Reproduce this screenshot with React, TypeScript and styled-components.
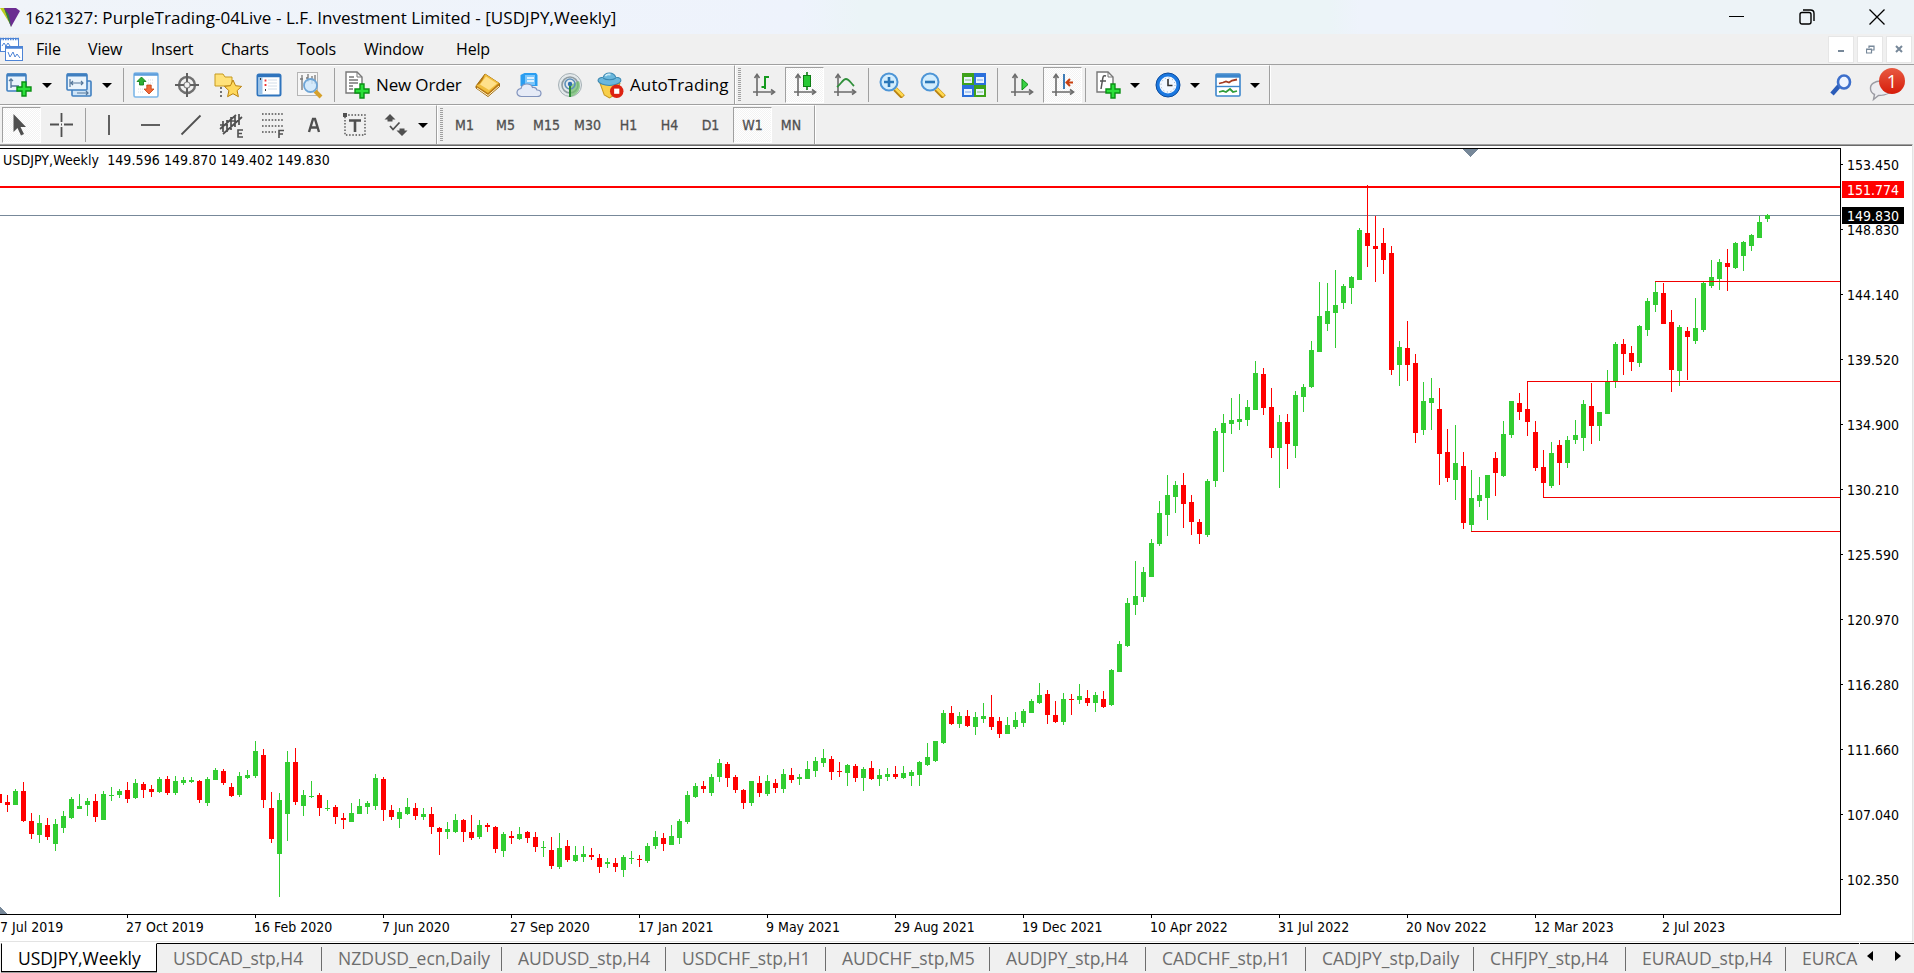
import React from "react";
import styled, { createGlobalStyle, css } from "styled-components";

const GlobalStyle = createGlobalStyle`
  * { box-sizing: border-box; }
  body {
    margin: 0;
    overflow: hidden;
    background: #f0f0f0;
    font-family: "Open Sans", "Noto Sans", sans-serif;
  }
`;

const Window = styled.div`
  width: 1914px;
  height: 973px;
  display: flex;
  flex-direction: column;
  background: #f0f0f0;
  color: #000;
  overflow: hidden;
`;

const TitleBar = styled.div`
  height: 34px;
  flex: none;
  display: flex;
  align-items: center;
  padding-right: 2px;
  background: linear-gradient(90deg, #f0f4f9 0, #eef3fc 800px, #ebf4f7 860px, #ebf4f7 1330px, #eef3fb 1360px, #eef3fb 1550px, #edf3f7 1600px);
  svg { display: block; }
`;

const TitleText = styled.div`
  flex: 1;
  margin-left: 4px;
  font-size: 17px;
  line-height: 35px;
  letter-spacing: 0.05px;
  white-space: nowrap;
`;

const CaptionButton = styled.div`
  width: 70px;
  height: 34px;
  display: flex;
  align-items: center;
  justify-content: center;
`;

const MenuBar = styled.div`
  height: 30px;
  flex: none;
  display: flex;
  align-items: center;
`;

const MenuItem = styled.div<{ $w: number }>`
  width: ${(p) => p.$w}px;
  font-size: 16px;
  line-height: 30px;
  letter-spacing: -0.15px;
  white-space: nowrap;
`;

const ChildButtons = styled.div`
  margin-left: auto;
  margin-right: 2px;
  display: flex;
  gap: 3px;
`;

const ChildButton = styled.div`
  width: 26px;
  height: 27px;
  background: #fff;
  border: 1px solid #e6e6e6;
  display: flex;
  align-items: center;
  justify-content: center;
`;

const ToolRow = styled.div`
  height: 40px;
  flex: none;
  display: flex;
  border-top: 1px solid #a0a0a0;
`;

const Bar = styled.div<{ $w: number }>`
  width: ${(p) => p.$w}px;
  height: 40px;
  display: flex;
  align-items: center;
  border-top: 1px solid #fff;
  border-right: 1px solid #a0a0a0;
  border-bottom: 1px solid #a0a0a0;
  box-shadow: 1px 0 0 #fff;
  white-space: nowrap;
`;

const pressed = css`
  border: 1px solid #fff;
  border-top-color: #a0a0a0;
  border-left-color: #a0a0a0;
  background: repeating-conic-gradient(#fff 0 25%, #f3f3f3 0 50%) 0 0 / 2px 2px;
`;

const Tool = styled.div<{ $w?: number; $active?: boolean; $ml?: number }>`
  width: ${(p) => p.$w ?? 41}px;
  margin-left: ${(p) => p.$ml ?? 0}px;
  height: 36px;
  flex: none;
  display: flex;
  align-items: center;
  justify-content: center;
  ${(p) => p.$active && pressed}
  svg { display: block; }
`;

const ToolText = styled.div<{ $w: number; $track: number }>`
  width: ${(p) => p.$w}px;
  flex: none;
  padding-bottom: 2px;
  font-size: 17px;
  letter-spacing: ${(p) => p.$track}px;
`;

const Frame = styled(Tool)`
  font-family: "DejaVu Sans Condensed", "DejaVu Sans", sans-serif;
  font-size: 14px;
  color: #505050;
  -webkit-text-stroke: 0.3px #505050;
`;

const Caret = styled.div<{ $ml: number }>`
  margin-left: ${(p) => p.$ml}px;
  flex: none;
  border: 5px solid transparent;
  border-top: 5px solid #000;
  border-bottom: 0;
`;

const Sep = styled.div<{ $l: number; $r: number }>`
  width: 1px;
  height: 34px;
  flex: none;
  margin: 0 ${(p) => p.$r}px 0 ${(p) => p.$l}px;
  background: #a0a0a0;
`;

const Grip = styled.div`
  width: 3px;
  height: 34px;
  flex: none;
  margin: 0 0 0 3px;
  background: repeating-linear-gradient(#a0a0a0 0 1px, #f0f0f0 1px 2px);
`;

const RightTools = styled.div`
  margin-left: auto;
  display: flex;
  align-items: center;
  gap: 17px;
  padding-right: 7px;
`;

const Mail = styled.div`
  position: relative;
  width: 38px;
  height: 36px;
`;

const Badge = styled.div`
  position: absolute;
  top: 1px;
  right: 2px;
  width: 26px;
  height: 26px;
  border-radius: 50%;
  background: linear-gradient(#e85a41, #d61c0a);
  color: #fff;
  font-size: 18px;
  line-height: 26px;
  text-align: center;
`;

const ChartWindow = styled.div`
  flex: 1;
  min-height: 0;
  display: grid;
  grid-template-columns: 1841px 1fr;
  grid-template-rows: 770px 1fr;
  background: #fff;
  border-top: 1px solid #a0a0a0;
  border-right: 1px solid #e3e3e3;
  border-bottom: 1px solid #e3e3e3;
  box-shadow: inset 0 1px 0 #696969;
  padding-top: 3px;
  margin-right: 1px;
  font-family: "DejaVu Sans Condensed", "DejaVu Sans", sans-serif;
  font-size: 14px;
`;

const Plot = styled.div`
  position: relative;
  svg { display: block; }
`;

const Caption = styled.div`
  position: absolute;
  left: 3px;
  top: 3px;
  line-height: 18px;
  letter-spacing: 0.08px;
  white-space: pre;
`;

const PriceAxis = styled.div`
  position: relative;
  height: 766px;
  margin-top: -16px;
  display: flex;
  flex-direction: column;
`;

const Price = styled.div`
  height: 65px;
  flex: none;
  display: flex;
  align-items: center;
  gap: 4px;
  &::before {
    content: "";
    width: 2px;
    height: 1px;
    background: #000;
  }
`;

const PriceTag = styled.div<{ $top: number; $bg: string }>`
  position: absolute;
  left: 1px;
  top: ${(p) => p.$top}px;
  width: 62px;
  height: 17px;
  padding-left: 5px;
  line-height: 18px;
  color: #fff;
  background: ${(p) => p.$bg};
`;

const DateAxis = styled.div`
  grid-column: 1 / 3;
  display: flex;
  overflow: hidden;
  line-height: 18px;
`;

const DateLabel = styled.div<{ $w: number }>`
  width: ${(p) => p.$w}px;
  flex: none;
  white-space: nowrap;
`;

const TabBar = styled.div`
  height: 31px;
  flex: none;
  display: flex;
  border-top: 1px solid #fff;
  padding-left: 1px;
`;

const TabStrip = styled.div`
  width: 1859px;
  flex: none;
  display: flex;
  overflow: hidden;
`;

const Tab = styled.div<{ $w: number; $active?: boolean }>`
  width: ${(p) => p.$w}px;
  height: 30px;
  flex: none;
  padding-left: 16px;
  font-size: 17.5px;
  line-height: 29px;
  letter-spacing: 0;
  white-space: nowrap;
  color: #6d6d6d;
  border-top: 1px solid #000;
  background: linear-gradient(#6d6d6d, #6d6d6d) right 3px / 1px 24px no-repeat;
  ${(p) =>
    p.$active &&
    css`
      height: 29px;
      color: #000;
      background: #fff;
      border: 1px solid #000;
      border-top-color: #fff;
      box-shadow: 0 1px 0 #a0a0a0;
    `}
  &:last-child {
    background: none;
  }
`;

const TabArrows = styled.div`
  flex: 1;
  display: flex;
  gap: 22px;
  padding: 7px 0 0 7px;
  border-top: 1px solid #000;
`;

type Candle = [up: 0 | 1, high: number, top: number, bottom: number, low: number];

// one entry per week, y values in window pixels
const candles: Candle[] = [
  [0,794,794,803,803],[0,795,802,805,812],[1,789,791,805,805],[0,782,791,821,822],[0,813,821,834,839],
  [1,815,823,835,843],[0,818,825,837,840],[1,819,824,844,851],[1,811,816,828,833],[1,797,799,818,819],
  [1,794,806,809,809],[1,798,801,805,816],[0,794,801,817,822],[1,791,794,820,820],[1,787,795,796,801],
  [1,789,791,795,798],[0,782,790,799,803],[1,779,783,798,799],[0,782,784,790,798],[0,785,789,792,797],
  [1,777,779,792,793],[0,776,779,793,795],[1,776,781,793,795],[1,777,780,783,785],[1,777,780,782,783],
  [0,780,781,800,803],[1,777,779,803,806],[1,768,770,780,780],[0,769,771,783,785],[0,783,787,796,797],
  [1,772,776,795,797],[1,770,775,778,779],[1,741,751,776,778],[0,749,755,800,808],[0,792,808,839,843],
  [1,793,800,854,897],[1,751,762,814,841],[0,748,762,802,805],[1,790,795,806,816],[1,781,796,797,798],
  [0,793,795,808,816],[1,800,808,809,811],[0,805,807,817,824],[0,813,818,820,829],[1,803,813,822,822],
  [1,799,806,814,814],[1,801,803,807,814],[1,774,778,806,810],[0,777,779,810,821],[0,805,810,817,820],
  [1,808,812,819,828],[1,798,807,814,815],[0,803,808,816,820],[1,808,814,817,820],[0,807,814,827,834],
  [0,827,828,832,855],[1,822,829,832,839],[1,814,820,832,833],[0,819,820,832,842],[0,815,832,838,840],
  [1,820,825,837,839],[0,823,825,827,832],[0,826,827,849,853],[1,832,834,851,857],[0,831,836,838,844],
  [1,827,834,839,840],[0,831,832,838,843],[0,832,837,847,852],[1,841,847,848,857],[0,837,850,866,869],
  [1,833,848,867,869],[0,840,846,860,862],[1,846,855,861,862],[1,846,854,857,862],[0,848,855,857,860],
  [0,854,858,867,873],[1,858,862,864,868],[0,858,863,867,872],[1,855,857,870,877],[1,851,858,859,864],
  [0,855,859,860,867],[1,843,846,861,863],[1,831,837,846,849],[0,833,838,844,851],[1,825,836,845,845],
  [1,819,821,838,844],[1,791,795,822,824],[1,783,786,797,798],[0,781,786,789,793],[1,774,777,793,796],
  [1,759,763,777,782],[0,762,764,778,787],[0,775,777,790,793],[0,789,790,803,809],[1,781,781,803,806],
  [0,776,783,793,797],[1,775,781,794,796],[0,779,783,788,793],[1,769,774,789,793],[0,768,775,780,783],
  [1,774,777,779,785],[1,761,769,779,779],[1,757,761,771,777],[1,749,758,763,767],[0,756,759,772,780],
  [0,762,771,772,777],[1,764,765,773,786],[0,764,766,778,782],[1,767,769,778,791],[0,761,768,779,780],
  [1,769,775,779,786],[1,768,774,777,781],[0,766,774,777,779],[1,766,773,778,779],[1,770,772,776,786],
  [1,761,762,775,786],[1,743,757,765,766],[1,741,741,761,762],[1,710,713,743,744],[0,706,713,724,725],
  [1,712,716,724,728],[0,710,716,726,727],[1,712,717,727,735],[1,703,716,719,723],[0,695,717,727,730],
  [0,717,721,734,738],[1,717,725,734,734],[1,712,720,727,729],[1,709,711,723,727],[1,699,701,713,713],
  [1,683,695,703,704],[0,690,694,715,724],[0,701,715,722,723],[1,693,699,722,725],[0,694,699,700,715],
  [1,684,696,700,704],[0,690,698,703,706],[1,692,695,703,712],[0,691,699,707,708],[1,669,670,705,706],
  [1,641,644,672,672],[1,598,603,646,647],[1,561,596,605,615],[1,567,572,597,602],[1,539,543,577,577],
  [1,501,513,544,546],[1,475,495,515,536],[1,481,485,497,513],[0,473,485,504,528],[0,495,502,522,535],
  [0,519,522,534,544],[1,479,481,535,537],[1,428,431,481,487],[1,414,423,433,472],[1,398,420,424,434],
  [1,394,419,422,430],[1,400,407,420,426],[1,361,373,410,410],[0,368,374,408,415],[0,388,407,448,458],
  [1,415,422,448,488],[0,414,422,444,469],[1,391,395,446,458],[1,384,387,397,412],[1,341,350,387,388],
  [1,282,316,352,352],[1,283,311,324,331],[1,270,305,313,348],[1,284,286,303,309],[1,276,277,288,304],
  [1,228,230,280,280],[0,185,233,246,267],[0,216,246,249,282],[0,228,243,260,274],[0,246,253,370,375],
  [1,341,347,365,386],[0,321,348,365,381],[0,354,363,433,443],[1,382,401,430,435],[1,378,398,403,430],
  [0,388,409,454,485],[0,429,452,478,482],[1,425,463,480,500],[0,452,466,523,529],[1,470,498,525,531],
  [1,477,495,501,507],[1,475,475,498,520],[0,452,458,473,496],[1,421,434,476,477],[1,401,401,435,438],
  [0,393,403,412,420],[0,382,409,422,436],[0,421,432,468,471],[0,450,467,483,497],[1,442,453,486,488],
  [0,440,445,463,485],[1,436,440,463,468],[1,420,435,440,444],[1,400,404,438,451],[0,383,406,426,444],
  [1,412,412,426,441],[1,370,381,414,414],[1,342,344,381,388],[0,339,344,354,375],[0,346,353,362,371],
  [1,325,326,363,367],[1,298,301,330,336],[1,282,292,305,312],[0,283,293,324,324],[0,310,322,370,392],
  [1,325,327,371,386],[0,327,331,337,380],[1,298,328,341,344],[1,282,283,330,332],[1,260,277,286,288],
  [1,259,262,279,290],[0,249,263,267,291],[1,242,243,268,269],[1,241,242,256,271],[1,234,235,246,251],
  [1,216,222,238,238],[1,214,215,219,222],
];

// support / resistance rays: start x, y
const rays = [
  [1655, 281],
  [1527, 381],
  [1543, 497],
  [1471, 531],
];

const prices = [
  "153.450", "148.830", "144.140", "139.520", "134.900", "130.210",
  "125.590", "120.970", "116.280", "111.660", "107.040", "102.350",
];

const dates = [
  "27 Oct 2019", "16 Feb 2020", "7 Jun 2020", "27 Sep 2020", "17 Jan 2021", "9 May 2021", "29 Aug 2021",
  "19 Dec 2021", "10 Apr 2022", "31 Jul 2022", "20 Nov 2022", "12 Mar 2023", "2 Jul 2023",
];

const menu: [string, number][] = [
  ["File", 52], ["View", 63], ["Insert", 70], ["Charts", 76], ["Tools", 67], ["Window", 92], ["Help", 60],
];

const tabs: [string, number][] = [
  ["USDJPY,Weekly", 156], ["USDCAD_stp,H4", 165], ["NZDUSD_ecn,Daily", 180], ["AUDUSD_stp,H4", 164],
  ["USDCHF_stp,H1", 160], ["AUDCHF_stp,M5", 164], ["AUDJPY_stp,H4", 156], ["CADCHF_stp,H1", 160],
  ["CADJPY_stp,Daily", 168], ["CHFJPY_stp,H4", 152], ["EURAUD_stp,H4", 160], ["EURCA", 73],
];

const frames = ["M1", "M5", "M15", "M30", "H1", "H4", "D1", "W1", "MN"];

const Svg = ({ children, s = 26 }: { children: React.ReactNode; s?: number }) => (
  <svg width={s} height={s} viewBox="0 0 26 26" fill="none">{children}</svg>
);

const Plus = ({ x, y }: { x: number; y: number }) => (
  <path
    d={`M${x + 5} ${y}h4v5h5v4h-5v5h-4v-5h-5v-4h5z`}
    fill="#2be03a"
    stroke="#0a9014"
    strokeWidth="1.4"
  />
);

const Axes = () => (
  <g stroke="#6b6b6b" strokeWidth="1.6">
    <path d="M6 3v21M2 20h21" />
    <path d="M3.5 6 6 2.5 8.5 6M20 17.5l3.5 2.5-3.5 2.5" />
  </g>
);

const NewChartIcon = () => (
  <Svg>
    <rect x="1" y="2" width="19" height="17" rx="1" fill="#eaf4fc" stroke="#3f7fc0" strokeWidth="1.6" />
    <path d="M1 3h19" stroke="#3f7fc0" strokeWidth="3" />
    <path d="M5 7v9M3 9l2-2 2 2M5 14h8" stroke="#55779a" strokeWidth="1.3" />
    <Plus x={11} y={10} />
  </Svg>
);

const ProfilesIcon = () => (
  <Svg>
    <rect x="6" y="9" width="19" height="15" rx="1" fill="#cfe4f7" stroke="#3f7fc0" strokeWidth="1.6" />
    <rect x="1" y="2" width="20" height="16" rx="1" fill="#eaf4fc" stroke="#3f7fc0" strokeWidth="1.6" />
    <path d="M1 3h20" stroke="#3f7fc0" strokeWidth="3" />
    <path d="M4 7v8M4 11h13M15 9l2 2-2 2M7 9l-2 2 2 2M11 21h11M20 19l2 2-2 2" stroke="#55779a" strokeWidth="1.2" />
  </Svg>
);

const MarketIcon = () => (
  <Svg>
    <rect x="1" y="1" width="24" height="24" rx="1.5" fill="#fff" stroke="#7db7e8" strokeWidth="1.6" />
    <path d="M1 2.5h24" stroke="#5f9fdc" strokeWidth="2.6" />
    <path d="M5 17h5M5 20h5M15 8h6M15 11h6" stroke="#d5dde6" strokeDasharray="1 1" />
    <path d="M8.500 5l4.500 4.500h-2.500v3.500h-4v-3.500H4z" fill="#2fae35" stroke="#0a7a12" strokeWidth=".8" />
    <path d="M16 22l-5-5h2.800v-4h4.400v4H21z" fill="#f2683a" stroke="#c2410e" strokeWidth=".8" />
  </Svg>
);

const TargetIcon = () => (
  <Svg>
    <circle cx="13" cy="13" r="8" stroke="#707070" strokeWidth="2.4" />
    <circle cx="13" cy="13" r="3" stroke="#8a8a8a" strokeWidth="1.2" />
    <path d="M13 1v9M13 16v9M1 13h9M16 13h9" stroke="#606060" strokeWidth="2" />
  </Svg>
);

const FolderStarIcon = () => (
  <svg width="28" height="28" viewBox="0 0 28 28" fill="none">
    <path d="M1 3h8l2 3h7v9H1z" fill="#ffe27a" stroke="#c79a1e" />
    <path d="M7 16v10" stroke="#555" strokeWidth="1.6" strokeDasharray="2 2" />
    <path d="M19 9l2.6 5.7 6 .7-4.5 4.2 1.3 6.1-5.400-3-5.400 3 1.300-6.100-4.500-4.200 6-.7z" fill="#ffd95c" stroke="#b98210" />
  </svg>
);

const TerminalIcon = () => (
  <Svg>
    <rect x="1.5" y="2.5" width="23" height="21" rx="1.5" fill="#fff" stroke="#2f74bd" strokeWidth="2" />
    <path d="M2 4h22" stroke="#2f74bd" strokeWidth="2.5" />
    <path d="M4.500 5v18" stroke="#9cc5ea" strokeWidth="4" />
    <path d="M9.500 7.500v2M9.500 12v2" stroke="#e33" strokeWidth="1.800" />
    <path d="M12 8h9M12 11h9M12 14h9M12 17h9" stroke="#d3deea" strokeWidth="1" />
    <path d="M4.500 6v2M9.500 17v2" stroke="#333" />
  </Svg>
);

const TesterIcon = () => (
  <svg width="28" height="28" viewBox="0 0 28 28" fill="none">
    <rect x="1.5" y="1.5" width="20" height="23" fill="#f6f6f6" stroke="#b5b5b5" />
    <path d="M6 4v15M4 8h3M12 3v8M16 5v8M19 4v9M10 7h2" stroke="#777" strokeWidth="1.3" />
    <path d="M19 20l6 6" stroke="#d6a02a" strokeWidth="4" />
    <circle cx="14.5" cy="14.5" r="6.5" fill="#cfe8fb" fillOpacity=".85" stroke="#6ea5d6" strokeWidth="1.8" />
  </svg>
);

const NewOrderIcon = () => (
  <svg width="27" height="28" viewBox="0 0 27 28" fill="none">
    <path d="M2 1h11l5 5v16H2z" fill="#fff" stroke="#777" strokeWidth="1.4" />
    <path d="M13 1v5h5" stroke="#777" />
    <path d="M5 6h5M5 9h9M5 12h9M5 15h4M5 18h4" stroke="#777" strokeWidth="1.4" />
    <Plus x={11} y={13} />
  </svg>
);

const BookIcon = () => (
  <Svg>
    <path d="M10 2l14.500 9.500v3L13 24.500 1 16v-2z" fill="#b97a14" stroke="#a26e10" />
    <path d="M2 16l11 7.500 11-9.500" stroke="#fff3cf" strokeWidth="1" />
    <path d="M10 2l14 9-11 10L1 13.500c4-1 7-5 9-11.500z" fill="#f0bd3c" />
    <path d="M11 4.500l11 7-8 6.500-9-5.500z" fill="#ffe08a" />
  </Svg>
);

const CloudIcon = () => (
  <Svg>
    <path d="M4.500 3l4-2H20l1.500 2v11h-17z" fill="#2a9df0" />
    <path d="M9 3h10v10H9z" fill="#7cc6fa" />
    <path d="M11 6h7M11 9h7" stroke="#fff" strokeWidth="1.400" />
    <path d="M5.500 24.500C2.500 24.500 1 22.500 1 20.500S2.500 17 5 16.500C5.500 13.500 8 12 11 12s5 1.500 5.500 3.500c3-.5 4 1 4.500 2.500 2.500 0 4 1.500 4 3.200s-1.500 3.300-4 3.300z" fill="#e6ebf7" stroke="#8193bd" strokeWidth="1.200" />
  </Svg>
);

const SignalIcon = () => (
  <Svg>
    <circle cx="13" cy="13" r="11.5" fill="#e3e8ea" stroke="#a5b0b5" />
    <circle cx="13" cy="13" r="8" stroke="#8f9ca2" strokeWidth="1.6" />
    <path d="M13 25V13l9-4c3 7-1 14-9 16z" fill="#6fbf6a" fillOpacity=".7" />
    <circle cx="13" cy="12" r="5" stroke="#5e8fb9" strokeWidth="1.6" />
    <circle cx="13" cy="12" r="2.2" fill="#2f6fb0" />
    <path d="M13 14v11" stroke="#2c8a36" strokeWidth="2" />
  </Svg>
);

const AutoIcon = () => (
  <Svg s={27}>
    <path d="M3 11h19l-5 11-5 3-5-3z" fill="#f8cf4a" stroke="#c9971c" />
    <path d="M1 8c0-2 3-3 5-3 1-3 3-4 6-4s5 1 6 4c3 0 5 1 5 3 0 3-6 5-11 5S1 11 1 8z" fill="#6ab7dc" stroke="#3b87b0" />
    <path d="M6 6c3 2 9 2 12 0" stroke="#3b87b0" />
    <path d="M8 4c1-1.500 3-2 5-1.500" stroke="#c9ebf8" strokeWidth="1.600" />
    <circle cx="19" cy="18.500" r="6.500" fill="#dd2211" />
    <rect x="16.500" y="16" width="5" height="5" fill="#fff" />
  </Svg>
);

const BarsIcon = () => (
  <Svg>
    <Axes />
    <path d="M14 4v13M14 5h4M10.5 15H14" stroke="#159a1e" strokeWidth="2" />
  </Svg>
);

const CandleIcon = () => (
  <Svg>
    <Axes />
    <path d="M15 0v18" stroke="#0d7d14" strokeWidth="1.6" />
    <rect x="11.5" y="3.5" width="7" height="11" fill="#28c934" stroke="#0d7d14" />
  </Svg>
);

const LineIcon = () => (
  <Svg>
    <Axes />
    <path d="M5 15C9 12 11 7 14 7s4 3 8 7" stroke="#2f8f3a" strokeWidth="1.8" />
  </Svg>
);

const ZoomIcon = ({ plus }: { plus?: boolean }) => (
  <Svg>
    <path d="M16 17l8 8" stroke="#b98210" strokeWidth="5" />
    <path d="M16 16l8 8" stroke="#ffd84f" strokeWidth="2.6" />
    <circle cx="10" cy="10" r="8.5" fill="#d3edfd" stroke="#4d95d6" strokeWidth="2" />
    <path d={plus ? "M5 10h10M10 5v10" : "M5 10h10"} stroke="#2a77b8" strokeWidth="2.6" />
  </Svg>
);

const TileIcon = () => (
  <Svg>
    {[[1, 1, "#3fa21a"], [13, 1, "#2b6fdb"], [1, 13, "#2b6fdb"], [13, 13, "#3fa21a"]].map(([x, y, c]) => (
      <g key={`${x}-${y}`}>
        <rect x={x} y={y} width="12" height="12" fill={c as string} />
        <rect x={+x + 2} y={+y + 4} width="8" height="6" fill="#e9f3ff" />
        <path d={`M${+x + 3} ${+y + 7}h6`} stroke={c as string} strokeOpacity=".6" />
      </g>
    ))}
  </Svg>
);

const ScrollIcon = () => (
  <Svg>
    <Axes />
    <path d="M13 7l6 5.5-6 5.500z" fill="#38d243" stroke="#0d8a14" />
  </Svg>
);

const ShiftIcon = () => (
  <Svg>
    <Axes />
    <path d="M14 2v15" stroke="#2b6fb0" strokeWidth="1.8" />
    <path d="M23 10.500h-6M20 7l-3.500 3.500L20 14" stroke="#c9400f" strokeWidth="2" />
  </Svg>
);

const IndicatorIcon = () => (
  <svg width="27" height="28" viewBox="0 0 27 28" fill="none">
    <path d="M2 1h11l5 5v15H2z" fill="#fff" stroke="#777" strokeWidth="1.4" />
    <path d="M13 1v5h5" stroke="#777" />
    <path d="M11 5c-3-1-3 1-3.5 4L6 18M5 10h6" stroke="#555" strokeWidth="1.5" />
    <Plus x={11} y={13} />
  </svg>
);

const ClockIcon = () => (
  <Svg>
    <circle cx="13" cy="13" r="12" fill="#1b78e0" stroke="#0c4b9c" />
    <circle cx="13" cy="13" r="8.5" fill="#f2f8ff" />
    <circle cx="13" cy="13" r="7" stroke="#8fa4ba" strokeWidth="1" strokeDasharray="1 2.7" />
    <path d="M13 7v6.5h4.5" stroke="#333" strokeWidth="1.6" />
  </Svg>
);

const TemplateIcon = () => (
  <Svg>
    <rect x="1" y="2" width="24" height="22" rx="1" fill="#fff" stroke="#3c86cc" strokeWidth="1.6" />
    <path d="M1 4h24" stroke="#3c86cc" strokeWidth="3.4" />
    <path d="M1 14.500h24" stroke="#3c86cc" strokeWidth="1.400" />
    <path d="M4 11.500l4-1 3-1 3 1 3-2 5-1" stroke="#a33b22" strokeWidth="1.8" />
    <path d="M4 20l4-1 3 1 4-3 3 3 4-1" stroke="#2f9c3a" strokeWidth="1.8" />
  </Svg>
);

const Line = ({ d, w = 1.8 }: { d: string; w?: number }) => (
  <Svg><path d={d} stroke="#505050" strokeWidth={w} /></Svg>
);

const Toolbar = () => (
  <ToolRow>
    <Bar $w={735}>
      <Tool $w={37}><NewChartIcon /></Tool>
      <Caret $ml={5} />
      <Tool $ml={6}><ProfilesIcon /></Tool>
      <Caret $ml={3} />
      <Sep $l={11} $r={1} />
      <Tool><MarketIcon /></Tool>
      <Tool><TargetIcon /></Tool>
      <Tool><FolderStarIcon /></Tool>
      <Tool><TerminalIcon /></Tool>
      <Tool><TesterIcon /></Tool>
      <Sep $l={4} $r={3} />
      <Tool $w={38}><NewOrderIcon /></Tool>
      <ToolText $w={91} $track={-0.15}>New Order</ToolText>
      <Tool><BookIcon /></Tool>
      <Tool><CloudIcon /></Tool>
      <Tool><SignalIcon /></Tool>
      <Tool $w={40}><AutoIcon /></Tool>
      <ToolText $w={100} $track={0.1}>AutoTrading</ToolText>
    </Bar>
    <Bar $w={535}>
      <Grip />
      <Tool $ml={2}><BarsIcon /></Tool>
      <Tool $active $w={39} $ml={1}><CandleIcon /></Tool>
      <Tool><LineIcon /></Tool>
      <Sep $l={3} $r={2} />
      <Tool><ZoomIcon plus /></Tool>
      <Tool><ZoomIcon /></Tool>
      <Tool><TileIcon /></Tool>
      <Sep $l={3} $r={3} />
      <Tool><ScrollIcon /></Tool>
      <Tool $active $w={39} $ml={1}><ShiftIcon /></Tool>
      <Sep $l={3} $r={2} />
      <Tool><IndicatorIcon /></Tool>
      <Caret $ml={1} />
      <Tool $ml={7}><ClockIcon /></Tool>
      <Caret $ml={2} />
      <Tool $ml={7}><TemplateIcon /></Tool>
      <Caret $ml={2} />
    </Bar>
    <RightTools>
      <svg width="22" height="22" viewBox="0 0 22 22" fill="none">
        <path d="M2 20l7-8" stroke="#2b5cb8" strokeWidth="4.5" />
        <ellipse cx="14" cy="8" rx="6" ry="6.5" fill="#eef4ff" stroke="#3d6fcb" strokeWidth="2.6" />
      </svg>
      <Mail>
        <svg width="30" height="36" viewBox="0 0 30 36" fill="none">
          <path d="M12 14c-6 0-11 3-10.500 8 .3 3 2 4.500 4 5.500l-1 5 5-4c8 0 14-3 14-9z" fill="#ececf0" stroke="#9a9aa2" strokeWidth="1.4" />
        </svg>
        <Badge>1</Badge>
      </Mail>
    </RightTools>
  </ToolRow>
);

const DrawBar = () => (
  <ToolRow>
    <Bar $w={437}>
      <Tool $active $w={39} $ml={2}>
        <Svg><path d="M4.500 2v18l4-4 3.500 7.500 3-1.500-3.500-7H17z" fill="#505050" /></Svg>
      </Tool>
      <Tool><Line d="M12.5 1v9M12.5 15v10M1 12.5h9M15 12.5h9M12 12.500h1" /></Tool>
      <Sep $l={3} $r={2} />
      <Tool><Line d="M13 3v20" /></Tool>
      <Tool><Line d="M4 13h19" /></Tool>
      <Tool><Line d="M3.5 22.5l19-19" /></Tool>
      <Tool>
        <Svg>
          <path d="M1 17L17 3M4 22L23 5M4 9v11M8 8v12M12 5v13M16 3v12M20 2v11M1 13h8M8 9h9" stroke="#505050" strokeWidth="1.7" />
          <path d="M24 18h-5v7h5M19 21.5h4" stroke="#505050" strokeWidth="1.6" />
        </Svg>
      </Tool>
      <Tool>
        <Svg>
          <path d="M2 2h22M2 8h22M2 14h22M2 20h14" stroke="#505050" strokeWidth="1.6" strokeDasharray="1.6 1.6" />
          <path d="M24 18.5h-5V26M19 22h4" stroke="#505050" strokeWidth="1.6" />
        </Svg>
      </Tool>
      <Tool><Svg><path d="M8 20l4-13h2l4 13M10 15.5h6.5" stroke="#505050" strokeWidth="2.4" /></Svg></Tool>
      <Tool>
        <Svg>
          <rect x="3" y="3" width="20" height="20" stroke="#505050" strokeWidth="1.4" strokeDasharray="1.5 1.7" />
          <path d="M7 8.5h12M13 8v12" stroke="#505050" strokeWidth="2.6" />
          <path d="M1 1h4v4H1z" fill="#505050" />
        </Svg>
      </Tool>
      <Tool>
        <Svg>
          <path d="M7 2l5.500 5.500H9.500v2h-5v-2h-3zM19 24l-5.500-5.500h3v-2h5v2h3z" fill="#505050" />
          <path d="M7 14l3 3.500 6.500-7" stroke="#505050" strokeWidth="1.800" />
        </Svg>
      </Tool>
      <Caret $ml={2} />
    </Bar>
    <Bar $w={378}>
      <Grip />
      {frames.map((f) => (
        <Frame key={f} $active={f === "W1"} $w={f === "W1" ? 39 : f === "MN" ? 38 : 41} $ml={f === "M1" ? 1 : f === "W1" ? 2 : 0}>{f}</Frame>
      ))}
    </Bar>
  </ToolRow>
);

const Candles = () => (
  <g>
    {candles.map(([up, high, top, bottom, low], i) => {
      const x = 8 * i - 1;
      return (
        <g key={i} fill={up ? "#32cd32" : "#ff0000"}>
          <rect x={x} y={high} width={1} height={low - high} />
          <rect x={x - 2} y={top} width={5} height={bottom - top} />
        </g>
      );
    })}
  </g>
);

const Chart = () => (
  <ChartWindow>
    <Plot>
      <svg width="1841" height="770" viewBox="0 148 1841 770" shapeRendering="crispEdges">
        <path d="M1463 149h15l-7.5 8zM0 907l7 7H0z" fill="#778899" />
        <rect x="0" y="215" width="1840" height="1" fill="#778899" />
        <Candles />
        <rect x="0" y="186" width="1840" height="2" fill="#ff0000" />
        {rays.map(([x, y]) => (
          <rect key={y} x={x} y={y} width={1840 - x} height={1} fill="#f00000" />
        ))}
        <path d="M0 148.5h1840.5v766H0" fill="none" stroke="#000" />
        {dates.map((d, i) => (
          <rect key={d} x={127 + i * 128} y={915} width={1} height={3} />
        ))}
      </svg>
      <Caption>USDJPY,Weekly  149.596 149.870 149.402 149.830</Caption>
    </Plot>
    <PriceAxis>
      {prices.map((p) => (
        <Price key={p}>{p}</Price>
      ))}
      <PriceTag $top={49} $bg="#ff0000">151.774</PriceTag>
      <PriceTag $top={75} $bg="#000">149.830</PriceTag>
    </PriceAxis>
    <DateAxis>
      <DateLabel $w={126}>7 Jul 2019</DateLabel>
      {dates.map((d) => (
        <DateLabel key={d} $w={128}>{d}</DateLabel>
      ))}
    </DateAxis>
  </ChartWindow>
);

export default function App() {
  return (
    <Window>
      <GlobalStyle />
      <TitleBar>
        <svg width="21" height="22" viewBox="0 0 21 22">
          <path d="M0 2h5l7 19z" fill="#b9cf1c" />
          <path d="M4 2h12l4 3-9 16z" fill="#6b2c91" />
          <path d="M4 2l7 19-2-12z" fill="#2f7f3f" />
        </svg>
        <TitleText>1621327: PurpleTrading-04Live - L.F. Investment Limited - [USDJPY,Weekly]</TitleText>
        <CaptionButton>
          <svg width="16" height="16"><path d="M0 7.5h15" stroke="#000" /></svg>
        </CaptionButton>
        <CaptionButton>
          <svg width="16" height="16" fill="none" stroke="#000" strokeWidth="1.4">
            <rect x="1" y="3.5" width="11" height="11.5" rx="2" />
            <path d="M4 1h7.5q3.5 0 3.5 3.5V12" />
          </svg>
        </CaptionButton>
        <CaptionButton>
          <svg width="16" height="16"><path d="M.5.5l15 15M15.5.5l-15 15" stroke="#000" strokeWidth="1.3" /></svg>
        </CaptionButton>
      </TitleBar>
      <MenuBar>
        <svg width="36" height="26" viewBox="0 0 36 26" fill="#fff" stroke="#4d84d6">
          <rect x="0.5" y="2.5" width="18" height="13" />
          <path d="M0 3h19" strokeWidth="2.5" strokeDasharray="1.5 1" />
          <path d="M2 10l2-3 2 3 2-3 2 3" fill="none" />
          <rect x="5.5" y="10.5" width="17" height="14" />
          <path d="M5 11.5h18" strokeWidth="2.5" />
          <path d="M8 16l2 5 3-5 2 5 2-3 3 4" fill="none" />
        </svg>
        {menu.map(([label, w]) => (
          <MenuItem key={label} $w={w}>{label}</MenuItem>
        ))}
        <ChildButtons>
          <ChildButton><svg width="8" height="8"><path d="M1 6h6" stroke="#778899" strokeWidth="2" /></svg></ChildButton>
          <ChildButton>
            <svg width="9" height="9" fill="none" stroke="#778899">
              <path d="M3 3V1h5v4H6M3 1.5h5" strokeWidth="1.2" />
              <path d="M.5 4h5v4h-5zM.5 4.5h5" strokeWidth="1.2" />
            </svg>
          </ChildButton>
          <ChildButton><svg width="8" height="8"><path d="M1 1l6 6M7 1L1 7" stroke="#778899" strokeWidth="2" /></svg></ChildButton>
        </ChildButtons>
      </MenuBar>
      <Toolbar />
      <DrawBar />
      <Chart />
      <TabBar>
        <TabStrip>
          {tabs.map(([label, w], i) => (
            <Tab key={label} $w={w} $active={i === 0}>{label}</Tab>
          ))}
        </TabStrip>
        <TabArrows>
          <svg width="6" height="10"><path d="M6 0v10L0 5z" /></svg>
          <svg width="6" height="10"><path d="M0 0v10l6-5z" /></svg>
        </TabArrows>
      </TabBar>
    </Window>
  );
}
